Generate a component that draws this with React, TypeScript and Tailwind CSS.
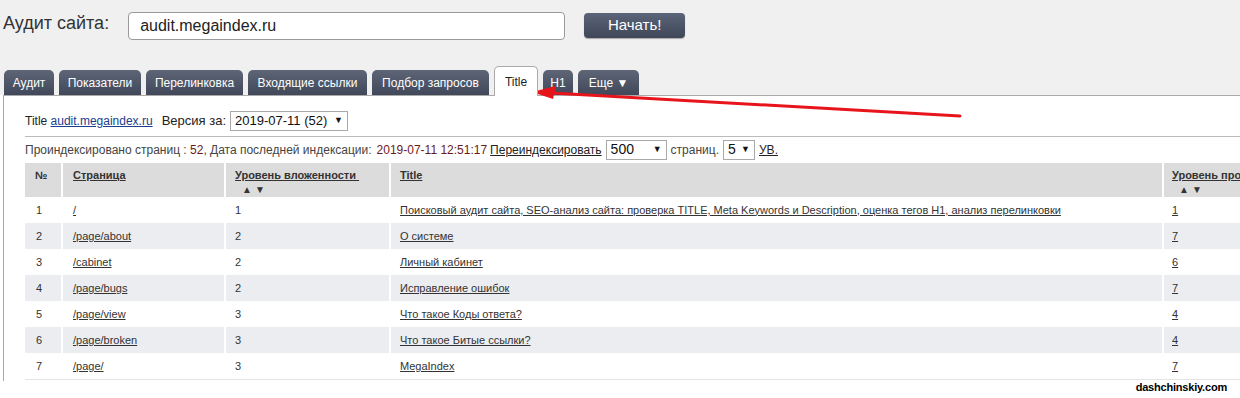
import React from "react";

const tabs = [
  { name: "Аудит", w: "w-[50px]" },
  { name: "Показатели", w: "w-[82px]" },
  { name: "Перелинковка", w: "w-[97px]" },
  { name: "Входящие ссылки", w: "w-[119px]" },
  { name: "Подбор запросов", w: "w-[117px]" },
  { name: "Title", w: "w-[44px]", active: true },
  { name: "H1", w: "w-[30px]" },
  { name: "Еще ▼", w: "w-[61px]" },
];

const rows = [
  { n: 1, page: "/", level: 1, title: "Поисковый аудит сайта, SEO-анализ сайта: проверка TITLE, Meta Keywords и Description, оценка тегов H1, анализ перелинковки", ext: 1 },
  { n: 2, page: "/page/about", level: 2, title: "О системе", ext: 7 },
  { n: 3, page: "/cabinet", level: 2, title: "Личный кабинет", ext: 6 },
  { n: 4, page: "/page/bugs", level: 2, title: "Исправление ошибок", ext: 7 },
  { n: 5, page: "/page/view", level: 3, title: "Что такое Коды ответа?", ext: 4 },
  { n: 6, page: "/page/broken", level: 3, title: "Что такое Битые ссылки?", ext: 4 },
  { n: 7, page: "/page/", level: 3, title: "MegaIndex", ext: 7 },
];

function Sort() {
  return <div className="pl-[7px] text-[10px] leading-[11px] text-[#333] tracking-[3px] font-normal">▲▼</div>;
}

function Select({ value, className }: { value: string; className: string }) {
  return (
    <span className={`inline-flex shrink-0 whitespace-nowrap items-center justify-between h-[20px] border border-[#a9a9a9] bg-white px-[4px] text-[#111] ${className}`}>
      <span>{value}</span>
      <span className="text-[9px]">▼</span>
    </span>
  );
}

export default function App() {
  return (
    <div className="relative w-[1240px] h-[398px] overflow-hidden bg-white font-['Liberation_Sans',Arial,sans-serif] text-[#333]">
      <div className="bg-[#f0f0f0] h-[95px] flex flex-col">
        <div className="flex items-center h-[28px] mt-[12px]">
          <span className="ml-[3px] text-[18px] text-[#333] -mt-[6px]">Аудит сайта:</span>
          <div className="ml-[19px] w-[437px] h-[28px] rounded-[4px] border border-[#9a9a9a] bg-white flex items-center pl-[11px] text-[16px] text-[#222]">
            audit.megaindex.ru
          </div>
          <button className="ml-[19px] w-[101px] h-[25px] -mt-[2px] rounded-[4px] bg-gradient-to-b from-[#5b6478] to-[#3f4758] text-white text-[15px] shadow-[0_1px_1px_rgba(0,0,0,0.3)]">
            Начать!
          </button>
        </div>
        <div className="flex items-end gap-[5px] mt-auto pl-[4px]">
          {tabs.map((t) =>
            t.active ? (
              <div
                key={t.name}
                className={`${t.w} h-[30px] -mb-px relative z-10 rounded-t-[5px] border border-b-0 border-[#aaa] bg-white flex items-start justify-center pt-[6px] text-[12px] text-[#222]`}
              >
                {t.name}
              </div>
            ) : (
              <div
                key={t.name}
                className={`${t.w} h-[25px] rounded-t-[5px] bg-gradient-to-b from-[#5d6576] to-[#404859] flex items-center justify-center text-[12px] text-white`}
              >
                {t.name}
              </div>
            )
          )}
        </div>
      </div>

      <div className="ml-[3px] border-l border-t border-[#aaa] h-[286px] pl-[21px] pt-[14px]">
        <div className="flex items-center h-[22px] border-b border-[#bbb] pb-[4px] box-content text-[12px]">
          <span className="text-[#222]">Title&nbsp;</span>
          <a className="underline text-[#1a3e8c]">audit.megaindex.ru</a>
          <span className="ml-[9px] text-[13px] text-[#222]">Версия за:</span>
          <Select value="2019-07-11 (52)" className="ml-[4px] w-[118px] text-[13px]" />
        </div>
        <div className="flex items-center h-[25px] text-[12px] text-[#444]">
          <span>Проиндексировано страниц : </span>
          <span className="text-[#6b1a1a]">&nbsp;52</span>
          <span>, Дата последней индексации: </span>
          <span className="ml-[5px] text-[#6b1a1a]">2019-07-11 12:51:17</span>
          <a className="ml-[3px] underline text-[#222]">Переиндексировать</a>
          <Select value="500" className="ml-[4px] w-[61px] text-[14px]" />
          <span className="ml-[4px]">страниц.</span>
          <Select value="5" className="ml-[4px] w-[32px] text-[14px]" />
          <a className="ml-[4px] underline text-[#222]">УВ.</a>
        </div>
        <table className="mt-[1px] w-[1300px] table-fixed border-collapse text-[11px] text-[#333]">
          <colgroup>
            <col className="w-[37px]" />
            <col className="w-[163px]" />
            <col className="w-[165px]" />
            <col className="w-[773px]" />
            <col />
          </colgroup>
          <thead>
            <tr className="bg-[#dcdcdc] h-[34px] align-top">
              <th className="text-left font-bold pl-[10px] pt-[4px] border-r-2 border-white">№</th>
              <th className="text-left font-bold pl-[10px] pt-[4px] border-r-2 border-white"><a className="underline">Страница</a></th>
              <th className="text-left font-bold pl-[9px] pt-[4px] border-r-2 border-white">
                <a className="underline">Уровень вложенности&nbsp;</a>
                <Sort />
              </th>
              <th className="text-left font-bold pl-[9px] pt-[4px] border-r-2 border-white"><a className="underline">Title</a></th>
              <th className="text-left font-bold pl-[8px] pt-[4px] whitespace-nowrap">
                <a className="underline">Уровень просмотров</a>
                <Sort />
              </th>
            </tr>
          </thead>
          <tbody>
            {rows.map((r) => (
              <tr key={r.n} className={`h-[26px] ${r.n % 2 === 0 ? "bg-[#ebedf0]" : "bg-white"}`}>
                <td className="pl-[11px] border-r-2 border-white">{r.n}</td>
                <td className="pl-[10px] border-r-2 border-white"><a className="underline">{r.page}</a></td>
                <td className="pl-[9px] border-r-2 border-white">{r.level}</td>
                <td className="pl-[9px] border-r-2 border-white"><a className="underline">{r.title}</a></td>
                <td className="pl-[8px]"><a className="underline">{r.ext}</a></td>
              </tr>
            ))}
          </tbody>
        </table>
        <div className="w-[1300px] border-t border-[#e4e4e4]" />
      </div>

      <div className="absolute right-[13px] top-[379px] text-[11px] font-bold text-black tracking-[-0.2px]">
        dashchinskiy.com
      </div>

      <svg className="absolute left-0 top-0 pointer-events-none" width="1240" height="398">
        <line x1="960" y1="116" x2="552" y2="93" stroke="#e8141b" strokeWidth="3" strokeLinecap="round" />
        <polygon points="532,92 556,86 553,99" fill="#e8141b" />
      </svg>
    </div>
  );
}
